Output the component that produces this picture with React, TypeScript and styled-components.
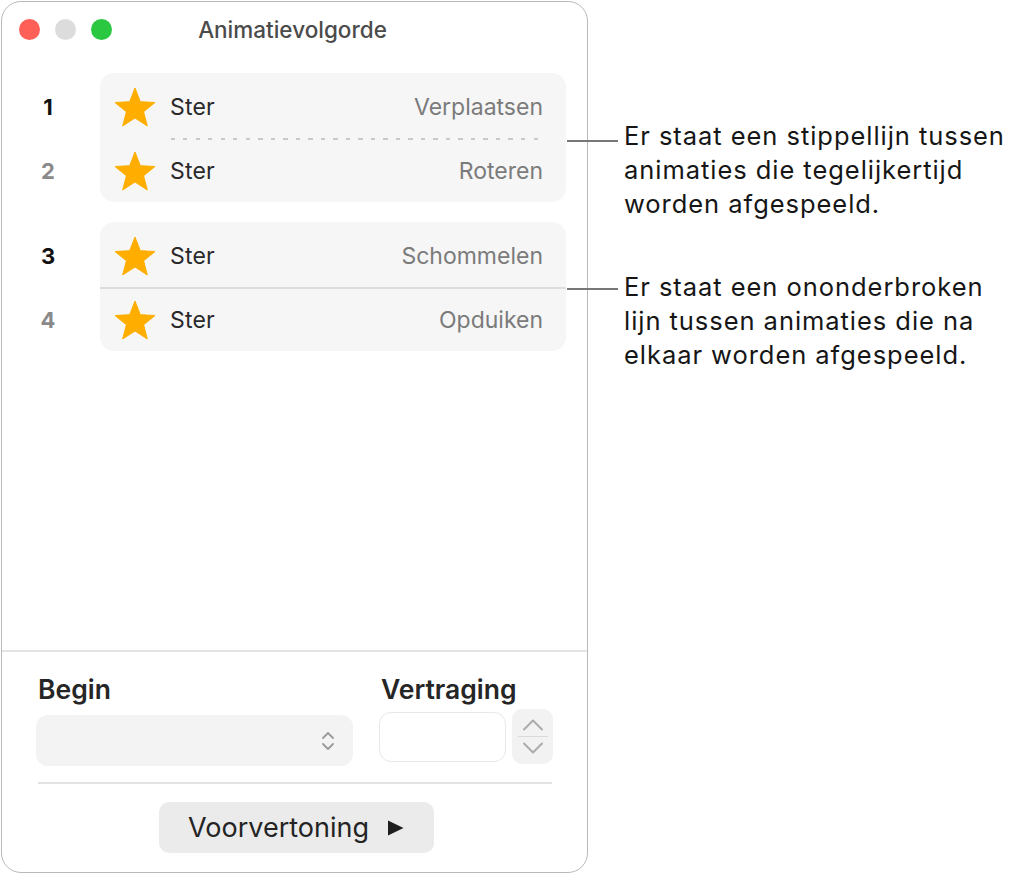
import React from "react";
import styled, { createGlobalStyle } from "styled-components";

const GlobalStyle = createGlobalStyle`
  html, body {
    margin: 0;
    padding: 0;
    background: #ffffff;
  }
  body {
    font-family: Inter, "Noto Sans", "Liberation Sans", sans-serif;
    -webkit-font-smoothing: antialiased;
  }
`;

const Page = styled.div`
  display: flex;
  align-items: flex-start;
  padding: 1px 0 0 1px;
  width: 1019px;
  height: 878px;
  box-sizing: border-box;
`;

const Window = styled.div`
  width: 587px;
  height: 872px;
  flex-shrink: 0;
  box-sizing: border-box;
  border: 1.5px solid #b9b9b9;
  border-radius: 20px;
  background: #ffffff;
  display: flex;
  flex-direction: column;
  overflow: hidden;
`;

const TitleBar = styled.div`
  position: relative;
  height: 54px;
  display: flex;
  align-items: center;
  justify-content: center;
  flex-shrink: 0;
`;

const Lights = styled.div`
  position: absolute;
  left: 17px;
  top: 0;
  bottom: 0;
  display: flex;
  align-items: center;
  gap: 15px;
`;

const Light = styled.span<{ $color: string }>`
  width: 21px;
  height: 21px;
  border-radius: 50%;
  background: ${(p) => p.$color};
`;

const Title = styled.div`
  font-size: 22.5px;
  font-weight: 500;
  color: #4b4b4b;
  margin-right: 4px;
`;

const List = styled.div`
  display: flex;
  flex-direction: column;
  gap: 20px;
  padding-top: 17px;
  flex: 1;
`;

const Group = styled.div`
  display: flex;
  align-items: flex-start;
`;

const Numbers = styled.div`
  width: 92px;
  margin-right: 6px;
  display: flex;
  flex-direction: column;
  padding-top: 3px;
  gap: 2px;
`;

const Num = styled.div<{ $dim?: boolean }>`
  height: 62px;
  display: flex;
  align-items: center;
  justify-content: center;
  font-size: 22px;
  font-weight: 700;
  color: ${(p) => (p.$dim ? "#8a8a8a" : "#111111")};
`;

const Card = styled.div`
  width: 466px;
  background: #f6f6f6;
  border-radius: 14px;
  padding-top: 3px;
  display: flex;
  flex-direction: column;
`;

const Row = styled.div`
  height: 62px;
  display: flex;
  align-items: center;
  padding: 0 23px 0 14px;
`;

const StarBox = styled.span`
  width: 42px;
  height: 40px;
  display: flex;
  flex-shrink: 0;
`;

const Name = styled.span`
  margin-left: 14px;
  font-size: 23px;
  letter-spacing: 0.2px;
  color: #2a2a2a;
`;

const Effect = styled.span`
  margin-left: auto;
  font-size: 23px;
  color: #7b7b7b;
`;

const Divider = styled.div<{ $dashed?: boolean }>`
  height: 2px;
  margin: ${(p) => (p.$dashed ? "0 22px 0 71px" : "0")};
  background: ${(p) =>
    p.$dashed
      ? "repeating-linear-gradient(to right, #c9c9c9 0 4px, transparent 4px 12.5px)"
      : "#dedede"};
`;

const Footer = styled.div`
  border-top: 2px solid #e4e4e4;
  padding: 22px 34px 19px 34px;
  display: flex;
  flex-direction: column;
`;

const Fields = styled.div`
  display: grid;
  grid-template-columns: 1fr auto;
  column-gap: 26px;
`;

const Field = styled.div`
  display: flex;
  flex-direction: column;
`;

const Label = styled.div`
  height: 30px;
  display: flex;
  align-items: center;
  font-size: 26.5px;
  font-weight: 600;
  color: #262626;
  padding-left: 2px;
`;

const Select = styled.div`
  margin-top: 11px;
  height: 51px;
  border-radius: 12px;
  background: #f3f3f3;
  display: flex;
  align-items: center;
  justify-content: flex-end;
  padding-right: 18px;
`;

const DelayRow = styled.div`
  margin-top: 5px;
  display: flex;
  align-items: center;
  gap: 6px;
`;

const DelayInput = styled.div`
  width: 127px;
  height: 50px;
  box-sizing: border-box;
  border: 1.5px solid #e8e8e8;
  border-radius: 12px;
  background: #ffffff;
`;

const Stepper = styled.div`
  width: 41px;
  height: 55px;
  border-radius: 10px;
  background: #f2f2f2;
  display: flex;
  flex-direction: column;
  align-items: center;
  justify-content: center;
  gap: 5px;
`;

const StepRule = styled.div`
  width: 30px;
  height: 1.5px;
  background: #dadada;
`;

const Rule = styled.div`
  margin: 16px 1px 0 2px;
  height: 2px;
  background: #e2e2e2;
`;

const Actions = styled.div`
  margin-top: 18px;
  display: flex;
  justify-content: center;
`;

const PreviewButton = styled.div`
  width: 275px;
  height: 51px;
  margin-left: 3px;
  border-radius: 10px;
  background: #ebebeb;
  display: flex;
  align-items: center;
  justify-content: center;
  gap: 18px;
  font-size: 27px;
  color: #242424;
`;

const Notes = styled.div`
  margin-left: 36px;
  padding-top: 118px;
  display: flex;
  flex-direction: column;
  gap: 49px;
`;

const Note = styled.div`
  position: relative;
  font-size: 25.5px;
  letter-spacing: 0.95px;
  line-height: 34px;
  color: #161616;
  white-space: nowrap;
`;

const Leader = styled.span<{ $top: number }>`
  position: absolute;
  left: -57px;
  top: ${(p) => p.$top}px;
  width: 51px;
  height: 1.5px;
  background: #777777;
`;

const Star = () => (
  <StarBox>
    <svg width="42" height="40" viewBox="0 0 42 40">
      <polygon
        points="21,1 26.3,14.7 41,15.5 29.6,24.8 33.3,39 21,31 8.7,39 12.4,24.8 1,15.5 15.7,14.7"
        fill="#ffae00"
        stroke="#ffae00"
        strokeWidth="1"
        strokeLinejoin="round"
      />
    </svg>
  </StarBox>
);

const UpDown = () => (
  <svg width="14" height="22" viewBox="0 0 14 22">
    <path
      d="M2 8 L7 3 L12 8 M2 14 L7 19 L12 14"
      fill="none"
      stroke="#9a9a9a"
      strokeWidth="1.8"
      strokeLinecap="round"
      strokeLinejoin="round"
    />
  </svg>
);

const Chevron = ({ up }: { up?: boolean }) => (
  <svg width="22" height="12" viewBox="0 0 22 12">
    <path
      d={up ? "M2 10.5 L11 1.5 L20 10.5" : "M2 1.5 L11 10.5 L20 1.5"}
      fill="none"
      stroke="#ababab"
      strokeWidth="2"
      strokeLinecap="round"
      strokeLinejoin="round"
    />
  </svg>
);

const Play = () => (
  <svg width="17" height="16" viewBox="0 0 17 16">
    <polygon points="1,0.5 16.5,8 1,15.5" fill="#1e1e1e" />
  </svg>
);

type Item = { n: number; effect: string; dim?: boolean };

const groups: { items: Item[]; dashed: boolean }[] = [
  {
    dashed: true,
    items: [
      { n: 1, effect: "Verplaatsen" },
      { n: 2, effect: "Roteren", dim: true },
    ],
  },
  {
    dashed: false,
    items: [
      { n: 3, effect: "Schommelen" },
      { n: 4, effect: "Opduiken", dim: true },
    ],
  },
];

export default function App() {
  return (
    <>
      <GlobalStyle />
      <Page>
        <Window>
          <TitleBar>
            <Lights>
              <Light $color="#fe5f57" />
              <Light $color="#dcdcdc" />
              <Light $color="#2ac840" />
            </Lights>
            <Title>Animatievolgorde</Title>
          </TitleBar>

          <List>
            {groups.map((g, gi) => (
              <Group key={gi}>
                <Numbers>
                  {g.items.map((it) => (
                    <Num key={it.n} $dim={it.dim}>
                      {it.n}
                    </Num>
                  ))}
                </Numbers>
                <Card>
                  {g.items.map((it, i) => (
                    <React.Fragment key={it.n}>
                      {i > 0 && <Divider $dashed={g.dashed} />}
                      <Row>
                        <Star />
                        <Name>Ster</Name>
                        <Effect>{it.effect}</Effect>
                      </Row>
                    </React.Fragment>
                  ))}
                </Card>
              </Group>
            ))}
          </List>

          <Footer>
            <Fields>
              <Field>
                <Label>Begin</Label>
                <Select>
                  <UpDown />
                </Select>
              </Field>
              <Field>
                <Label>Vertraging</Label>
                <DelayRow>
                  <DelayInput />
                  <Stepper>
                    <Chevron up />
                    <StepRule />
                    <Chevron />
                  </Stepper>
                </DelayRow>
              </Field>
            </Fields>
            <Rule />
            <Actions>
              <PreviewButton>
                <span>Voorvertoning</span>
                <Play />
              </PreviewButton>
            </Actions>
          </Footer>
        </Window>

        <Notes>
          <Note>
            <Leader $top={21} />
            Er staat een stippellijn tussen
            <br />
            animaties die tegelijkertijd
            <br />
            worden afgespeeld.
          </Note>
          <Note>
            <Leader $top={18} />
            Er staat een ononderbroken
            <br />
            lijn tussen animaties die na
            <br />
            elkaar worden afgespeeld.
          </Note>
        </Notes>
      </Page>
    </>
  );
}
